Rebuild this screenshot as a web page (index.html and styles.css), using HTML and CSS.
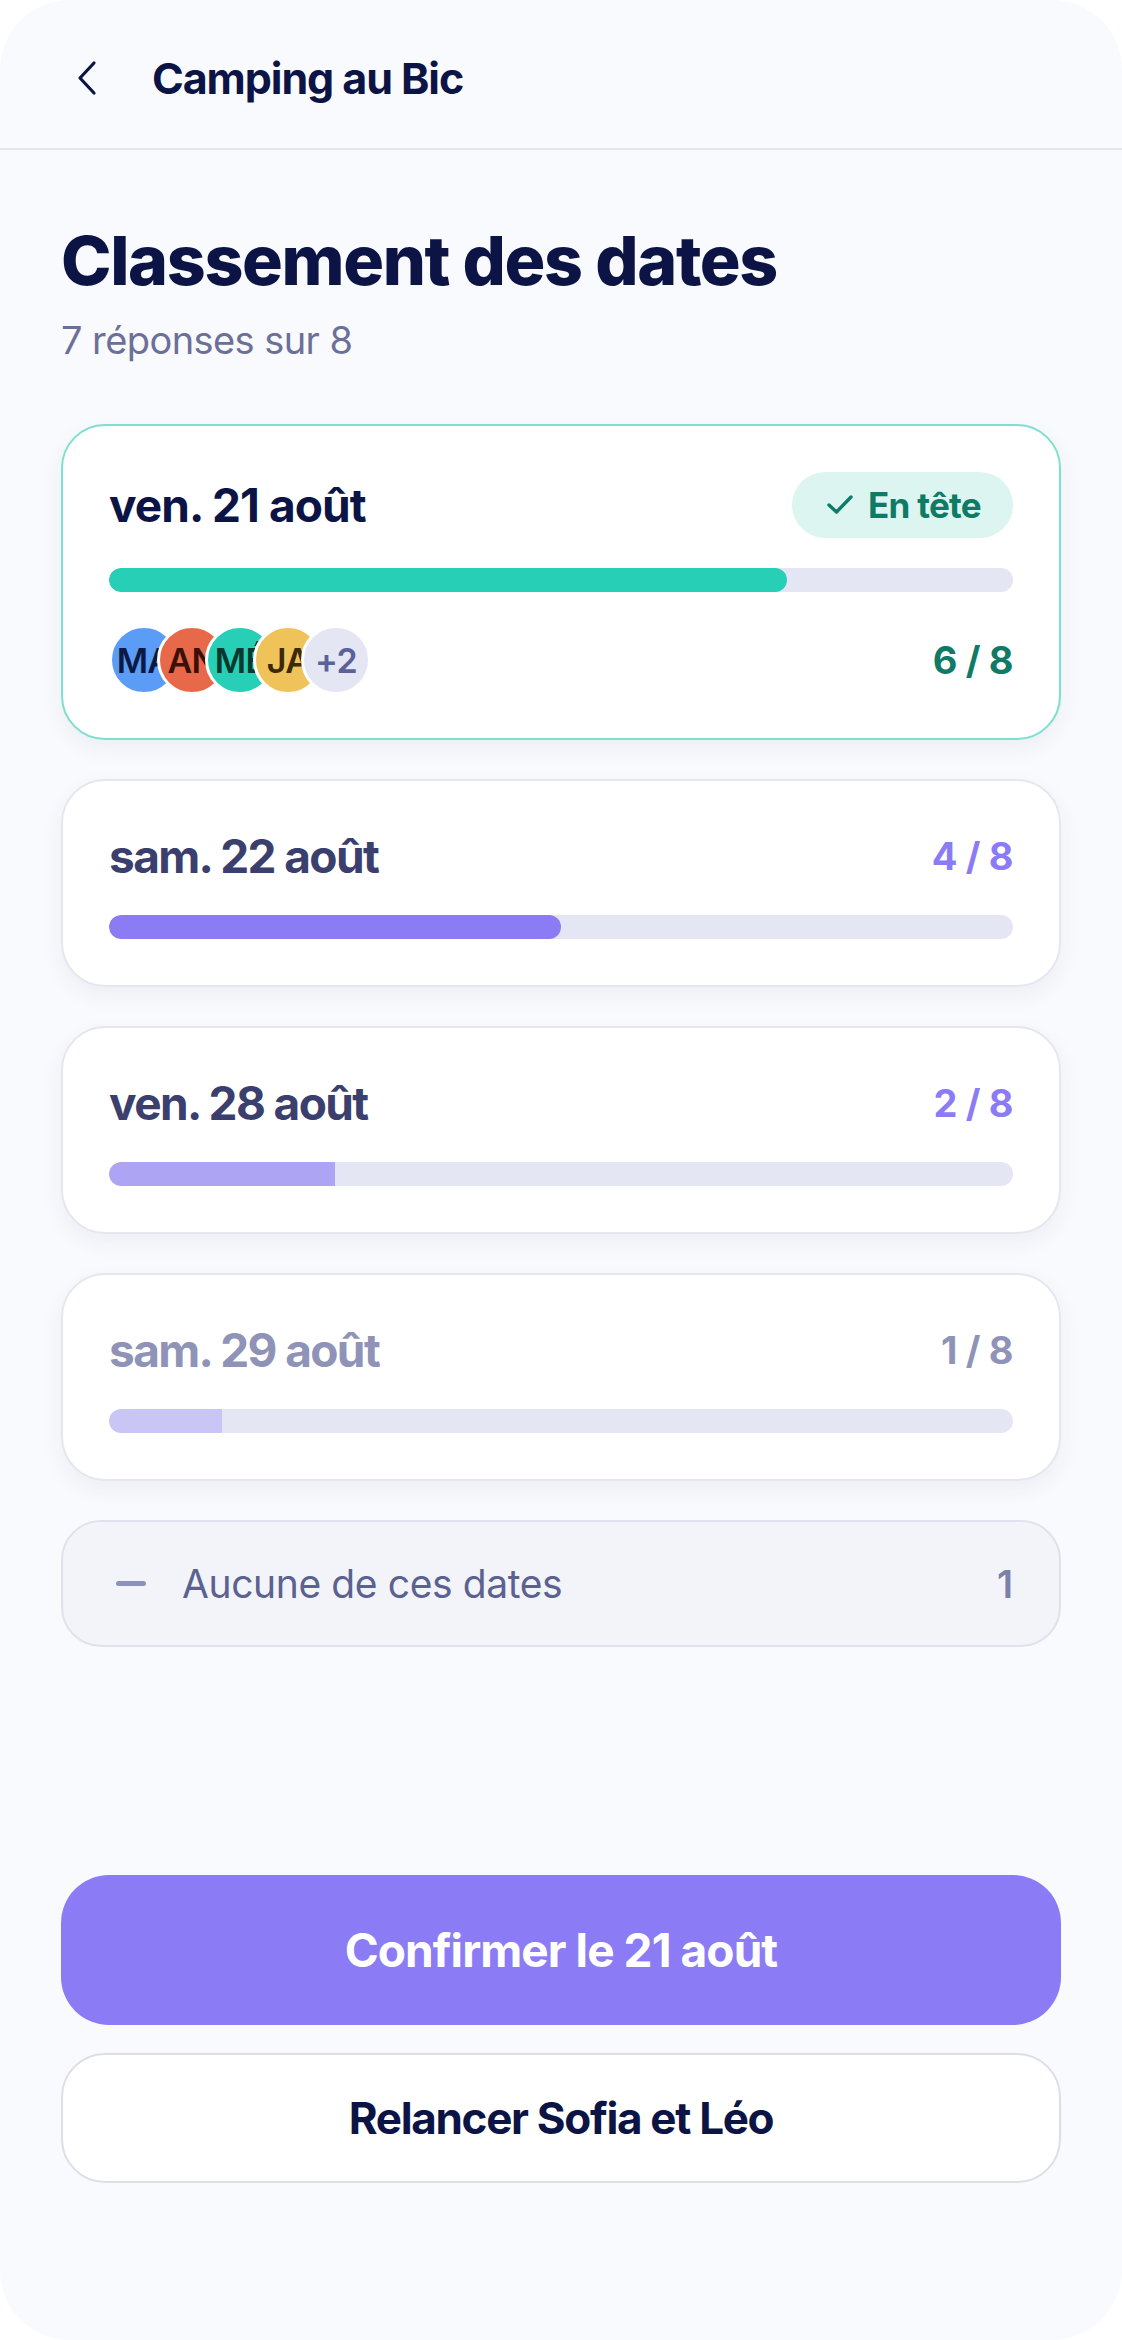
FILE: index.html
```html
<!DOCTYPE html>
<html lang="fr">
<head>
    <meta charset="UTF-8">
    <meta name="viewport" content="width=device-width, initial-scale=1.0">
    <title>Classement des dates</title>
    <link rel="stylesheet" href="styles.css">
</head>
<body>
<div class="screen">
    <header class="topbar">
        <button class="back" type="button" aria-label="Retour">
            <svg width="22" height="36" viewBox="0 0 22 36"><path d="M18 3 L4 18 L18 33" fill="none" stroke="#0b1444" stroke-width="3.2" stroke-linecap="round" stroke-linejoin="round"/></svg>
        </button>
        <span class="topbar-title">Camping au Bic</span>
    </header>

    <main class="content">
        <h1>Classement des dates</h1>
        <p class="subtitle">7 réponses sur 8</p>

        <ul class="dates">
            <li class="date-card leader">
                <div class="date-row">
                    <span class="date-name">ven. 21 août</span>
                    <span class="badge">
                        <svg width="26" height="20" viewBox="0 0 26 20"><path d="M2 10 L9.5 17 L24 2" fill="none" stroke="#0f7a66" stroke-width="3.4" stroke-linecap="round" stroke-linejoin="round"/></svg>
                        En tête
                    </span>
                </div>
                <div class="bar"><div class="bar-fill teal" style="width: 75%"></div></div>
                <div class="voters-row">
                    <div class="avatars">
                        <span class="avatar blue">MA</span>
                        <span class="avatar red">AN</span>
                        <span class="avatar green">MÉ</span>
                        <span class="avatar yellow">JA</span>
                        <span class="avatar more">+2</span>
                    </div>
                    <span class="count teal">6 / 8</span>
                </div>
            </li>
            <li class="date-card">
                <div class="date-row">
                    <span class="date-name">sam. 22 août</span>
                    <span class="count purple">4 / 8</span>
                </div>
                <div class="bar"><div class="bar-fill purple" style="width: 50%"></div></div>
            </li>
            <li class="date-card">
                <div class="date-row">
                    <span class="date-name">ven. 28 août</span>
                    <span class="count purple">2 / 8</span>
                </div>
                <div class="bar"><div class="bar-fill light flat" style="width: 25%"></div></div>
            </li>
            <li class="date-card faded">
                <div class="date-row">
                    <span class="date-name">sam. 29 août</span>
                    <span class="count">1 / 8</span>
                </div>
                <div class="bar"><div class="bar-fill pale flat" style="width: 12.5%"></div></div>
            </li>
            <li class="none-card">
                <span class="dash"></span>
                <span class="none-label">Aucune de ces dates</span>
                <span class="none-count">1</span>
            </li>
        </ul>

        <div class="actions">
            <button class="btn primary" type="button">Confirmer le 21 août</button>
            <button class="btn secondary" type="button">Relancer Sofia et Léo</button>
        </div>
    </main>
</div>
</body>
</html>
```

FILE: styles.css
```css
* {
    box-sizing: border-box;
}

body {
    margin: 0;
    background-color: #ffffff;
    font-family: Inter, "Noto Sans", sans-serif;
    color: #0b1444;
}

.screen {
    min-height: 2340px;
    background-color: #f9fafd;
    border-radius: 70px;
    display: flex;
    flex-direction: column;
    overflow: hidden;
}

/* header */
.topbar {
    height: 150px;
    padding-top: 8px;
    display: flex;
    align-items: center;
    border-bottom: 2px solid #e4e6ee;
}

.back {
    margin-left: 76px;
    padding: 0;
    border: none;
    background: none;
    display: flex;
    cursor: pointer;
}

.topbar-title {
    margin-left: 54px;
    font-size: 43px;
    font-weight: 700;
    letter-spacing: -0.025em;
    color: #0b1444;
}

/* content */
.content {
    flex: 1;
    display: flex;
    flex-direction: column;
    padding: 0 61px 157px;
}

h1 {
    margin: 72px 0 0;
    font-size: 68px;
    line-height: 76px;
    font-weight: 800;
    letter-spacing: -0.02em;
    color: #0b1444;
}

.subtitle {
    margin: 15px 0 0;
    font-size: 38px;
    line-height: 54px;
    letter-spacing: -0.015em;
    color: #6b7098;
}

.dates {
    list-style: none;
    margin: 57px 0 0;
    padding: 0;
    display: flex;
    flex-direction: column;
    gap: 39px;
}

.date-card {
    background-color: #fff;
    border: 2px solid #e5e7ef;
    border-radius: 44px;
    padding: 45px 46px 46px;
    box-shadow: 0 8px 22px rgba(40, 50, 110, 0.06);
}

.date-card.leader {
    border-color: #7fdfce;
    padding: 47px 46px 43px;
}

.date-row {
    display: flex;
    justify-content: space-between;
    align-items: center;
    height: 60px;
}

.leader .date-row {
    height: 64px;
}

.date-name {
    font-size: 46px;
    font-weight: 700;
    letter-spacing: -0.035em;
    color: #3b3f6e;
}

.leader .date-name {
    letter-spacing: -0.02em;
    color: #0b1444;
}

.faded .date-name,
.faded .count {
    color: #8f93b8;
}

.count {
    font-size: 38px;
    font-weight: 700;
    letter-spacing: -0.01em;
}

.count.teal {
    color: #0f7a66;
}

.count.purple {
    color: #8b7cf5;
}

.badge {
    height: 66px;
    padding: 0 32px 0 35px;
    display: flex;
    align-items: center;
    gap: 15px;
    border-radius: 33px;
    background-color: #dcf5f0;
    color: #0f7a66;
    font-size: 35px;
    font-weight: 700;
    letter-spacing: -0.02em;
}

.bar {
    margin-top: 29px;
    height: 24px;
    border-radius: 12px;
    background-color: #e4e7f3;
    overflow: hidden;
}

.leader .bar {
    margin-top: 31px;
}

.bar-fill {
    height: 100%;
    border-radius: 12px;
}

.bar-fill.flat {
    border-radius: 12px 0 0 12px;
}

.bar-fill.teal { background-color: #27cfb6; }
.bar-fill.purple { background-color: #8b7cf5; }
.bar-fill.light { background-color: #ada4f4; }
.bar-fill.pale { background-color: #c9c5f4; }

.voters-row {
    margin-top: 33px;
    display: flex;
    justify-content: space-between;
    align-items: center;
}

.avatars {
    display: flex;
}

.avatar {
    width: 70px;
    height: 70px;
    border-radius: 50%;
    border: 3px solid #fff;
    display: flex;
    align-items: center;
    justify-content: center;
    font-size: 34px;
    font-weight: 600;
    letter-spacing: -0.02em;
    white-space: nowrap;
    overflow: hidden;
}

.avatar + .avatar {
    margin-left: -22px;
}

.avatar.blue { background-color: #5b9cf6; color: #0b1a44; }
.avatar.red { background-color: #e8684a; color: #3a1008; }
.avatar.green { background-color: #27cfb6; color: #08392f; }
.avatar.yellow { background-color: #f0c35a; color: #3a2a05; }
.avatar.more { background-color: #e4e7f3; color: #5b6299; }

.none-card {
    display: flex;
    align-items: center;
    height: 127px;
    padding: 0 46px 0 53px;
    border: 2px solid #dfe1ec;
    border-radius: 40px;
    background-color: #f3f4fa;
}

.dash {
    width: 30px;
    height: 5px;
    border-radius: 3px;
    background-color: #8d92bc;
}

.none-label {
    margin-left: 36px;
    flex: 1;
    font-size: 39px;
    letter-spacing: -0.01em;
    color: #5b6190;
}

.none-count {
    font-size: 38px;
    font-weight: 600;
    color: #7c81aa;
}

/* bottom buttons */
.actions {
    margin-top: auto;
    display: flex;
    flex-direction: column;
    gap: 28px;
}

.btn {
    width: 100%;
    font-family: inherit;
    font-weight: 700;
    cursor: pointer;
}

.btn.primary {
    height: 150px;
    border: none;
    border-radius: 48px;
    background-color: #8b7cf5;
    color: #fff;
    font-size: 46px;
    letter-spacing: -0.02em;
}

.btn.secondary {
    height: 130px;
    border: 2px solid #dcdee8;
    border-radius: 44px;
    background-color: #fff;
    color: #0b1444;
    font-size: 44px;
    letter-spacing: -0.03em;
}
```
